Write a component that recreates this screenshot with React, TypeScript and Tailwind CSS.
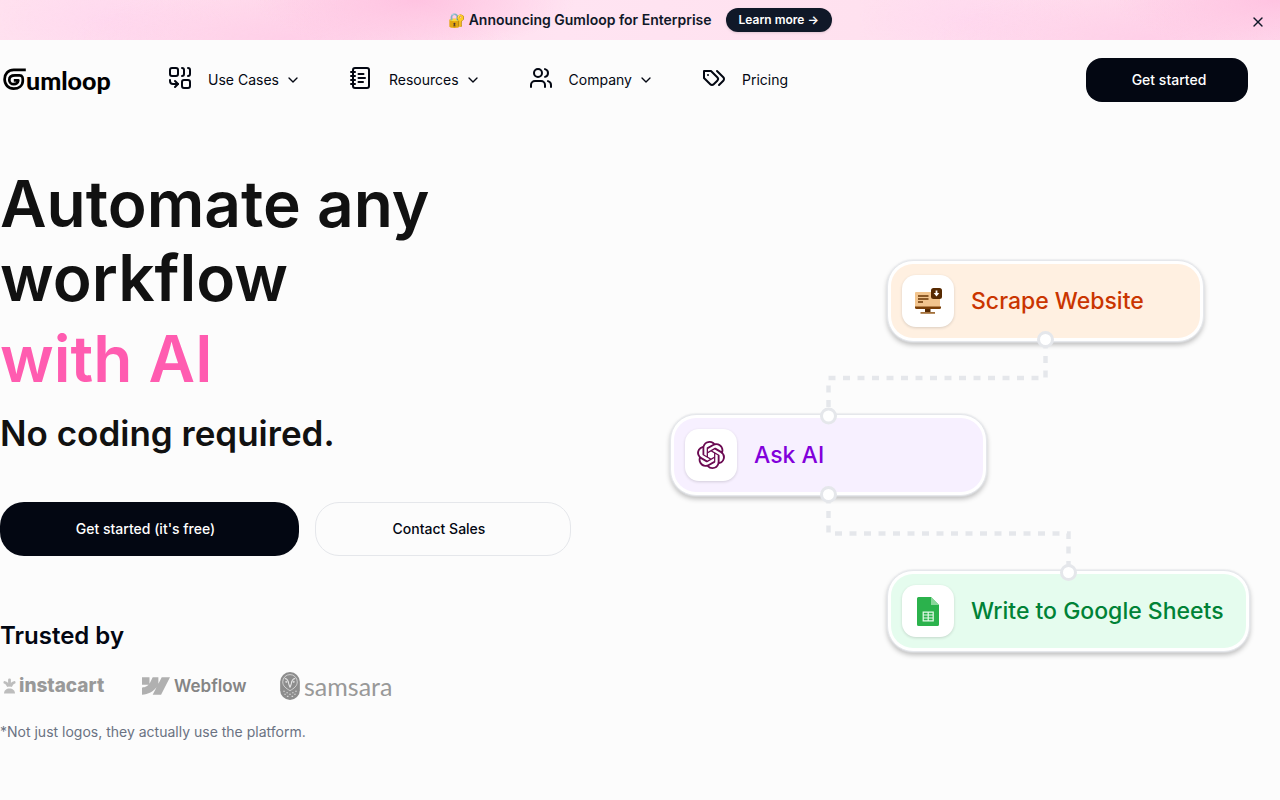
import { ChevronDown, NotebookText, Users, X } from "lucide-react";
import { SiOpenai, SiWebflow } from "react-icons/si";
import type { ReactNode } from "react";

function CombineIcon() {
  return (
    <svg viewBox="0 0 24 24" className="size-6" fill="none" stroke="currentColor" strokeWidth="2" strokeLinecap="round" strokeLinejoin="round" aria-hidden="true">
      <rect width="8" height="8" x="2" y="2" rx="2" />
      <path d="M14 2c1.1 0 2 .9 2 2v4c0 1.1-.9 2-2 2" />
      <path d="M20 2c1.1 0 2 .9 2 2v4c0 1.1-.9 2-2 2" />
      <path d="M10 18H5c-1.7 0-3-1.3-3-3v-1" />
      <polyline points="7 21 10 18 7 15" />
      <rect width="8" height="8" x="14" y="14" rx="2" />
    </svg>
  );
}

function TagsIcon() {
  return (
    <svg viewBox="0 0 24 24" className="size-6" fill="none" stroke="currentColor" strokeWidth="2" strokeLinecap="round" strokeLinejoin="round" aria-hidden="true">
      <path d="M9 5H2v7l6.29 6.29c.94.94 2.48.94 3.42 0l3.58-3.58c.94-.94.94-2.48 0-3.42L9 5Z" />
      <path d="M6 9.01V9" />
      <path d="m15 5 6.3 6.3a2.4 2.4 0 0 1 0 3.4L17 19" />
    </svg>
  );
}

function GumloopMark() {
  return (
    <svg viewBox="0 0 24 24" className="size-6" fill="none" stroke="currentColor" strokeLinecap="butt" strokeLinejoin="round" aria-hidden="true">
      <path d="M23.8 1.900H11.800C6.200 1.900 2.600 5.800 2.600 11.300s3.800 9.300 9 9.300c5 0 9-2.800 9.200-7.600.1-3-.2-5.600-3.300-5.600H13c-3.600 0-5.700 1.700-5.700 4.500 0 2.500 1.900 4.200 4.500 4.200 2.300 0 4-1 4.500-3.700h-4.500" strokeWidth="2.700" />
    </svg>
  );
}

function InstacartMark() {
  return (
    <svg viewBox="0 0 13 16" className="h-4 w-[13px]" aria-hidden="true">
      <g fill="none" stroke="#bdbdbd" strokeWidth="2.800" strokeLinecap="round">
        <path d="M6.500 1.800v5.500" />
        <path d="M1.800 4.500c1 .2 2.500 1.200 3 3" />
        <path d="M11.200 4.500c-1 .2-2.500 1.200-3 3" />
      </g>
      <path d="M1 15.500c0-3 2.300-5 5.500-5s5.500 2 5.500 5Z" fill="#bdbdbd" />
    </svg>
  );
}

function OwlMark() {
  return (
    <svg viewBox="0 0 19 27" className="h-7 w-5" aria-hidden="true">
      <rect x="0" y="0" width="19" height="27" rx="9.500" fill="#8d8d8d" />
      <path d="M2.500 9.500a7 7 0 0 1 14 0c0 4-3.200 6.300-7 8.500-3.800-2.200-7-4.500-7-8.500Z" fill="none" stroke="#d6d6d6" strokeWidth="0.900" />
      <path d="M9.500 15 8.300 11.500C8 8.500 6.500 6 4.500 6.500M9.500 15l1.200-3.500C11 8.500 12.500 6 14.500 6.500" fill="none" stroke="#e4e4e4" strokeWidth="1.100" />
      <circle cx="6" cy="9.500" r="1.100" fill="#d6d6d6" />
      <circle cx="13" cy="9.500" r="1.100" fill="#d6d6d6" />
      <path d="M3 18.500h1.500M6 20h1.500M11.500 20H13M14.500 18.500H16M4 21.500h1.500M8.700 21.500h1.600M13.500 21.500H15M6.500 23.500H8M11 23.500h1.500" stroke="#d6d6d6" strokeWidth="1" />
    </svg>
  );
}

function ScrapeIcon() {
  return (
    <svg viewBox="0 0 28 28" className="size-7" aria-hidden="true">
      <path d="M2 5h24v16H1V6a1 1 0 0 1 1-1Z" fill="#f2c48d" />
      <path d="M1 19.500h26v1a1.500 1.500 0 0 1-1.500 1.500h-23A1.500 1.500 0 0 1 1 20.500Z" fill="#7a3e06" />
      <path d="M11 22h5.500v3H11Z" fill="#572a02" />
      <path d="M6.500 25h14.500v1.800H6.500Z" fill="#a3703a" />
      <path d="M4 9h10.500M4 12h10.500M4 15h5" stroke="#6b3605" strokeWidth="1.600" />
      <rect x="17" y="1" width="11" height="11" rx="2.500" fill="#572a02" />
      <path d="M22.500 3.500v4" stroke="#fff" strokeWidth="1.800" />
      <path d="m19.700 6 2.800 3.500L25.300 6Z" fill="#fff" />
    </svg>
  );
}

function SheetsIcon() {
  return (
    <svg viewBox="0 0 22 29" className="h-[29px] w-[22px]" aria-hidden="true">
      <path d="M1.500 0H14l8 8v19.500a1.500 1.500 0 0 1-1.500 1.500h-19A1.500 1.500 0 0 1 0 27.500v-26A1.500 1.500 0 0 1 1.500 0Z" fill="#2bb24c" />
      <path d="M14 0v8h8Z" fill="#8ad79b" />
      <path d="M6.200 15.200h10v8.600h-10ZM6.200 18h10M6.200 21h10M11.200 15.200v8.600" fill="none" stroke="#e5f9e9" strokeWidth="1.200" />
    </svg>
  );
}

function NavItem({ icon, label, menu }: { icon: ReactNode; label: string; menu?: boolean }) {
  const content = (
    <>
      <span className="pb-1">{icon}</span>
      <span className="ml-4">{label}</span>
      {menu && <ChevronDown className="ml-[6px] size-4" />}
    </>
  );
  const style = "flex h-10 items-center whitespace-nowrap";
  return menu ? (
    <button type="button" className={style}>{content}</button>
  ) : (
    <a href="#pricing" className={style}>{content}</a>
  );
}

function FlowNode({ className, tint, icon, label }: { className: string; tint: string; icon: ReactNode; label: string }) {
  return (
    <div className={`absolute h-[82px] rounded-[26px] border border-[#e5e7eb] bg-white p-[3px] shadow-[0_0_0_1px_rgba(229,231,235,0.5),0_3px_5px_rgba(0,0,0,0.25)] ${className}`}>
      <div className={`flex h-full items-center rounded-[22px] pl-[11px] text-[23px] font-medium ${tint}`}>
        <span className="flex size-[52px] shrink-0 items-center justify-center rounded-[14px] bg-white shadow-[0_1px_3px_rgba(0,0,0,0.15)]">{icon}</span>
        <span className="ml-[17px] whitespace-nowrap">{label}</span>
      </div>
    </div>
  );
}

function Workflow() {
  return (
    <div className="relative h-[394px] w-[580px] shrink-0">
      <FlowNode className="top-0 left-[217px] w-[317px]" tint="bg-[#fff0e1] text-[#ca3500]" icon={<ScrapeIcon />} label="Scrape Website" />
      <FlowNode className="top-[154px] left-0 w-[317px]" tint="bg-[#f7f0ff] text-[#8200db]" icon={<SiOpenai className="size-7 text-[#6b0a52]" />} label="Ask AI" />
      <FlowNode className="top-[310px] left-[217px] w-[363px]" tint="bg-[#e5fcee] text-[#008236]" icon={<SheetsIcon />} label="Write to Google Sheets" />
      <svg viewBox="0 0 580 394" className="absolute inset-0 h-full w-full" fill="none" aria-hidden="true">
        <g stroke="#e5e7eb" strokeWidth="4.500" strokeDasharray="7 7.500">
          <path d="M375.500 81.500V118H158.500V150" />
          <path d="M158.500 236.500V273.500H398.500V306" />
        </g>
        <g fill="#fff" stroke="#e5e7eb" strokeWidth="3">
          <circle cx="375.500" cy="79.500" r="7" />
          <circle cx="158.500" cy="156" r="7" />
          <circle cx="158.500" cy="234.500" r="7" />
          <circle cx="398.500" cy="312.500" r="7" />
        </g>
      </svg>
    </div>
  );
}

export default function App() {
  return (
    <div className="min-h-screen bg-[#fcfcfc] font-['Inter','Liberation_Sans',sans-serif] text-[#030712]">
      <div className="flex h-10 items-center bg-[radial-gradient(ellipse_160px_50px_at_415px_0px,#ffc3e1,transparent),radial-gradient(ellipse_220px_60px_at_290px_40px,#ffcfe8,transparent),radial-gradient(ellipse_120px_50px_at_110px_20px,#ffd9ef,transparent),linear-gradient(90deg,#ffe1ef,#ffdcec_40%,#ffe4f2_65%,#ffe1ef)] bg-[length:860px_40px]">
        <span className="w-8" />
        <div className="flex flex-1 items-center justify-center gap-[14px] text-sm font-semibold text-[#101828]">
          <span>🔐 Announcing Gumloop for Enterprise</span>
          <a href="#enterprise" className="flex h-6 items-center rounded-full bg-[#101828] px-[13px] text-xs text-white shadow-sm">Learn more →</a>
        </div>
        <button type="button" aria-label="Dismiss" className="mr-3 flex w-5 justify-center pt-1 text-[#101828]">
          <X className="size-4" />
        </button>
      </div>

      <header className="flex h-20 items-center pr-8">
        <a href="#home" aria-label="Gumloop" className="flex w-[168px] shrink-0 items-center pl-[2px] text-black">
          <GumloopMark />
          <span className="font-['Lato',sans-serif] text-[25px] leading-8 font-black">umloop</span>
        </a>
        <nav className="flex gap-12 text-sm">
          <NavItem icon={<CombineIcon />} label="Use Cases" menu />
          <NavItem icon={<NotebookText className="size-6" />} label="Resources" menu />
          <NavItem icon={<Users className="size-6" />} label="Company" menu />
          <NavItem icon={<TagsIcon />} label="Pricing" />
        </nav>
        <button type="button" className="ml-auto h-11 w-[162px] rounded-[16px] bg-[#030712] pl-1 text-sm font-medium text-white">Get started</button>
      </header>

      <main className="grid grid-cols-2 items-center pt-[47px]">
        <section className="text-[#111111]">
          <h1 className="text-[64px] leading-[74px] font-semibold">
            Automate any
            <br />
            workflow
            <span className="block pt-[7px] text-[#ff5cb0]">with AI</span>
          </h1>
          <h2 className="pt-[17px] text-[35px] leading-10 font-semibold">No coding required.</h2>
          <div className="flex gap-4 pt-[49px] text-sm font-medium">
            <button type="button" className="h-[54px] w-[299px] rounded-[24px] bg-[#030712] pr-2 text-white">Get started (it&apos;s free)</button>
            <button type="button" className="h-[54px] w-[256px] rounded-[24px] border border-[#e5e7eb] pr-2 text-[#030712]">Contact Sales</button>
          </div>
          <h3 className="pt-16 text-2xl font-semibold text-[#030712]">Trusted by</h3>
          <div className="mt-5 flex h-7 items-center text-[#999999]">
            <span className="flex w-[142px] items-center gap-[3px] pl-[3px]">
              <InstacartMark />
              <span className="text-[19px] leading-7 font-extrabold">instacart</span>
            </span>
            <span className="flex w-[138px] items-center gap-1">
              <SiWebflow className="size-7 text-[#b0b0b0]" />
              <span className="text-[17px] leading-7 font-semibold text-[#858585]">Webflow</span>
            </span>
            <span className="flex items-center gap-1">
              <OwlMark />
              <span className="font-['Lato',sans-serif] text-[25px] leading-7">samsara</span>
            </span>
          </div>
          <p className="pt-5 text-sm leading-6 text-[#6a7282]">*Not just logos, they actually use the platform.</p>
        </section>
        <section className="flex justify-center pt-[3px]">
          <Workflow />
        </section>
      </main>
    </div>
  );
}
